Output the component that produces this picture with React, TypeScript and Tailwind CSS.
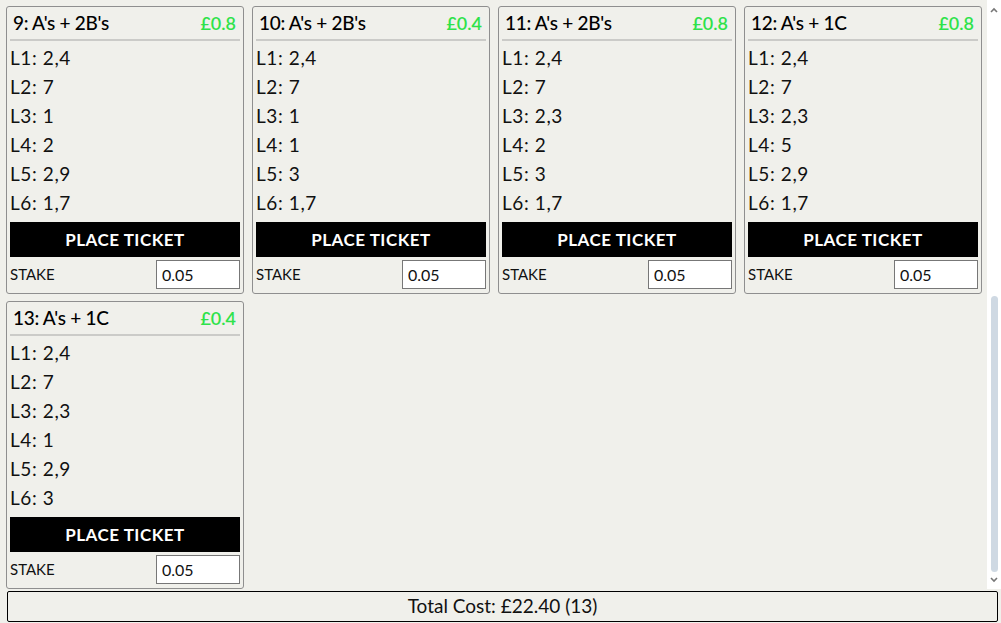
interface Ticket {
  id: number;
  name: string;
  cost: string;
  legs: string[];
}

const tickets: Ticket[] = [
  { id: 9, name: "A's + 2B's", cost: '£0.8', legs: ['2,4', '7', '1', '2', '2,9', '1,7'] },
  { id: 10, name: "A's + 2B's", cost: '£0.4', legs: ['2,4', '7', '1', '1', '3', '1,7'] },
  { id: 11, name: "A's + 2B's", cost: '£0.8', legs: ['2,4', '7', '2,3', '2', '3', '1,7'] },
  { id: 12, name: "A's + 1C", cost: '£0.8', legs: ['2,4', '7', '2,3', '5', '2,9', '1,7'] },
  { id: 13, name: "A's + 1C", cost: '£0.4', legs: ['2,4', '7', '2,3', '1', '2,9', '3'] },
];

function TicketCard({ ticket }: { ticket: Ticket }) {
  return (
    <div className="w-[238px] h-[288px] border border-[#8f8f8f] rounded-[3px] px-[2px] flex flex-col">
      <div className="flex items-center justify-between h-[34px] pl-[3px] pr-[4px] pt-[1px] border-b-2 border-[#cbcbc8] mx-[1px]">
        <span className="text-[19px] font-medium text-black tracking-[-0.3px]">
          {ticket.id}: {ticket.name}
        </span>
        <span className="text-[18px] font-semibold text-[#2ee24a]">{ticket.cost}</span>
      </div>
      <div className="flex flex-col pt-[2px] pl-[1px]">
        {ticket.legs.map((leg, i) => (
          <div key={i} className="h-[29px] leading-[29px] text-[19px] tracking-[0.6px] text-[#111]">
            L{i + 1}: {leg}
          </div>
        ))}
      </div>
      <button
        type="button"
        className="mt-[5px] mx-[1px] h-[35px] bg-black text-white font-bold text-[17px] tracking-[0.5px]"
      >
        PLACE TICKET
      </button>
      <div className="flex items-center justify-between mt-[3px] pl-[1px] pr-[1px]">
        <span className="text-[15px] text-[#111]">STAKE</span>
        <input
          defaultValue="0.05"
          className="w-[84px] h-[29px] bg-white border border-[#777] px-[5px] text-[16px] text-[#111] outline-none"
        />
      </div>
    </div>
  );
}

export default function App() {
  return (
    <div className="w-[1001px] h-[623px] bg-[#f0f0eb] flex flex-col font-['Lato','Noto_Sans',sans-serif]">
      <div className="h-[589px] flex">
        <div className="flex-1 overflow-hidden">
          <div className="flex flex-wrap gap-x-[8px] gap-y-[7px] pt-[6px] pl-[6px]">
            {tickets.map((t) => (
              <TicketCard key={t.id} ticket={t} />
            ))}
          </div>
        </div>
        {/* scrollbar */}
        <div className="w-[14px] bg-white flex flex-col items-center pt-[7px] pb-[6px]">
          <svg width="8" height="6" viewBox="0 0 8 6">
            <path d="M1 5 L4 2 L7 5" fill="none" stroke="#777" strokeWidth="1.6" />
          </svg>
          <div className="mt-auto mb-[5px] w-[7px] h-[276px] rounded-full bg-[#cfd9e3]" />
          <svg width="8" height="6" viewBox="0 0 8 6">
            <path d="M1 1 L4 4 L7 1" fill="none" stroke="#777" strokeWidth="1.6" />
          </svg>
        </div>
      </div>
      <div className="ml-[7px] mr-[3px] mt-[2px] h-[31px] border border-black rounded-[2px] flex items-center justify-center text-[19px] text-[#111]">
        Total Cost: £22.40 (13)
      </div>
    </div>
  );
}
